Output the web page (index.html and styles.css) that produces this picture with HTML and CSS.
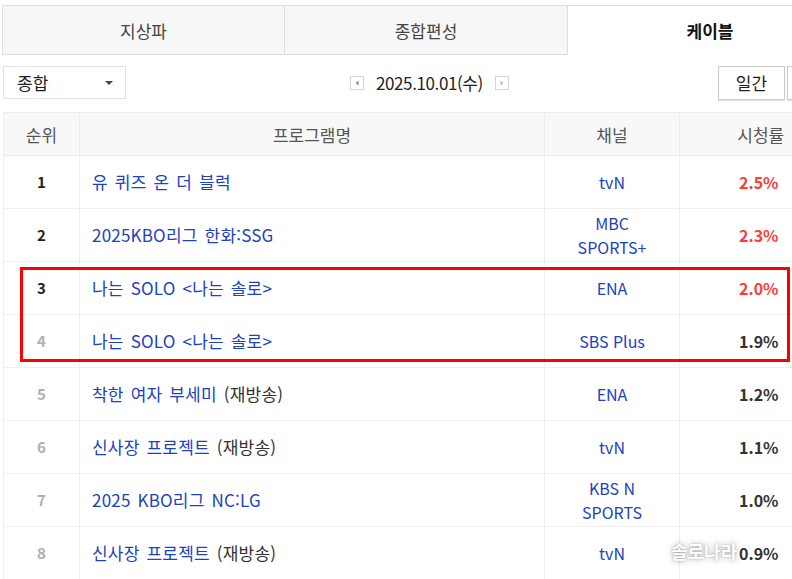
FILE: index.html
```html
<!DOCTYPE html>
<html lang="ko">
<head>
<meta charset="utf-8">
<link rel="stylesheet" href="styles.css">
</head>
<body>
<div class="page">
  <div class="tabs">
    <div class="tab">지상파</div>
    <div class="tab">종합편성</div>
    <div class="tab active">케이블</div>
  </div>
  <div class="controls">
    <div class="select"><span>종합</span><span class="caret"></span></div>
    <div class="date">
      <span class="arr"><svg width="14" height="14" viewBox="0 0 14 14"><rect x="0.5" y="0.5" width="13" height="13" fill="#fff" stroke="#d4d4d4"/><path d="M8.5 4.5 L5.5 7 L8.5 9.5 Z" fill="#888"/></svg></span>
      <span class="dtext">2025.10.01(수)</span>
      <span class="arr"><svg width="14" height="14" viewBox="0 0 14 14"><rect x="0.5" y="0.5" width="13" height="13" fill="#fff" stroke="#d4d4d4"/><path d="M5.5 4.5 L8.5 7 L5.5 9.5 Z" fill="#bbb"/></svg></span>
    </div>
    <div class="btns"><div class="btn">일간</div><div class="btn"></div></div>
  </div>
  <table class="rank">
    <colgroup><col class="w-rank"><col class="w-prog"><col class="w-ch"><col class="w-rate"></colgroup>
    <thead>
      <tr><th>순위</th><th>프로그램명</th><th>채널</th><th>시청률</th></tr>
    </thead>
    <tbody>
      <tr><td class="c-rank top">1</td><td class="c-prog"><a>유 퀴즈 온 더 블럭</a></td><td class="c-ch">tvN</td><td class="c-rate hot">2.5%</td></tr>
      <tr><td class="c-rank top">2</td><td class="c-prog"><a>2025KBO리그 한화:SSG</a></td><td class="c-ch">MBC<br>SPORTS+</td><td class="c-rate hot">2.3%</td></tr>
      <tr><td class="c-rank top">3</td><td class="c-prog"><a>나는 SOLO &lt;나는 솔로&gt;</a></td><td class="c-ch">ENA</td><td class="c-rate hot">2.0%</td></tr>
      <tr><td class="c-rank">4</td><td class="c-prog"><a>나는 SOLO &lt;나는 솔로&gt;</a></td><td class="c-ch">SBS Plus</td><td class="c-rate">1.9%</td></tr>
      <tr><td class="c-rank">5</td><td class="c-prog"><a>착한 여자 부세미</a> <span class="re">(재방송)</span></td><td class="c-ch">ENA</td><td class="c-rate">1.2%</td></tr>
      <tr><td class="c-rank">6</td><td class="c-prog"><a>신사장 프로젝트</a> <span class="re">(재방송)</span></td><td class="c-ch">tvN</td><td class="c-rate">1.1%</td></tr>
      <tr><td class="c-rank">7</td><td class="c-prog"><a>2025 KBO리그 NC:LG</a></td><td class="c-ch">KBS N<br>SPORTS</td><td class="c-rate">1.0%</td></tr>
      <tr><td class="c-rank">8</td><td class="c-prog"><a>신사장 프로젝트</a> <span class="re">(재방송)</span></td><td class="c-ch">tvN</td><td class="c-rate">0.9%</td></tr>
    </tbody>
  </table>
  <div class="highlight"></div>
  <div class="watermark">솔로나라</div>
</div>
</body>
</html>
```

FILE: styles.css
```css
html, body {
  margin: 0;
  padding: 0;
  background: #fff;
  overflow: hidden;
}
body {
  width: 792px;
  height: 579px;
  font-family: "Noto Sans CJK KR", "Noto Sans", sans-serif;
  color: #333;
}
.page {
  position: relative;
  width: 900px;
  padding: 5px 0 0 2px;
}
.tabs {
  display: flex;
  height: 50px;
}
.tab {
  box-sizing: border-box;
  width: 283px;
  height: 50px;
  background: #f7f7f7;
  border: 1px solid #dedede;
  border-left: none;
  display: flex;
  align-items: center;
  justify-content: center;
  font-size: 17px;
  color: #444;
}
.tab:first-child {
  border-left: 1px solid #dedede;
}
.tab.active {
  width: 284px;
  background: #fff;
  border-bottom: none;
  border-right: none;
  font-weight: bold;
  color: #111;
}
.controls {
  display: flex;
  align-items: center;
  margin-top: 10px;
  height: 35px;
}
.select {
  box-sizing: border-box;
  width: 123px;
  height: 33px;
  margin-left: 1px;
  border: 1px solid #e2e2e2;
  display: flex;
  align-items: center;
  justify-content: space-between;
  padding: 0 12px 0 13px;
  font-size: 17px;
  color: #222;
}
.caret {
  width: 0;
  height: 0;
  border-left: 4px solid transparent;
  border-right: 4px solid transparent;
  border-top: 4px solid #444;
}
.date {
  display: flex;
  align-items: center;
  margin-left: 224px;
  font-size: 17px;
  color: #222;
}
.arr {
  display: flex;
}
.arr svg {
  display: block;
}
.dtext {
  margin: 0 12px 0 12px;
  letter-spacing: -0.4px;
}
.btns {
  display: flex;
  margin-left: 209px;
}
.btn {
  box-sizing: border-box;
  width: 67px;
  height: 34px;
  border: 1px solid #ccc;
  box-shadow: 0 1px 1px rgba(0,0,0,0.12);
  display: flex;
  align-items: center;
  justify-content: center;
  font-size: 17px;
  color: #222;
  margin-right: 2px;
  background: #fff;
}
.rank {
  border-collapse: collapse;
  margin-top: 12px;
  margin-left: 1px;
  table-layout: fixed;
  width: 838px;
}
.w-rank { width: 76px; }
.w-prog { width: 465px; }
.w-ch { width: 135px; }
.w-rate { width: 162px; }
.rank th {
  height: 42px;
  background: #f8f8f8;
  border-top: 1px solid #ececec;
  border-bottom: 1px solid #ececec;
  border-left: 1px solid #ececec;
  font-weight: normal;
  font-size: 17px;
  color: #555;
  padding: 0;
}
.rank td {
  height: 52px;
  border-bottom: 1px solid #efefef;
  border-left: 1px solid #f0f0f0;
  font-size: 16px;
  padding: 0;
  line-height: 24px;
}
td.c-rank {
  text-align: center;
  font-weight: bold;
  color: #b0b0b0;
  font-size: 15px;
}
td.c-rank.top { color: #222; }
td.c-prog {
  padding-left: 12px;
  text-align: left;
  font-size: 17px;
  letter-spacing: 0.2px;
  word-spacing: 2px;
}
td.c-prog a { color: #1c42c2; }
td.c-prog .re { color: #333; }
td.c-ch { color: #1c42c2; text-align: center; }
td.c-rate {
  text-align: right;
  padding-right: 63px;
  font-weight: bold;
  color: #333;
}
td.c-rate.hot { color: #ff3b3b; }
.highlight {
  position: absolute;
  left: 20px;
  top: 267px;
  width: 764px;
  height: 89px;
  border: 3px solid #ff0000;
  pointer-events: none;
}
.watermark {
  position: absolute;
  left: 671px;
  top: 538px;
  font-size: 18px;
  font-weight: bold;
  color: #fff;
  text-shadow: 0 0 6px rgba(0,0,0,0.35), 0 0 2px rgba(0,0,0,0.3);
  opacity: 0.9;
}
```
